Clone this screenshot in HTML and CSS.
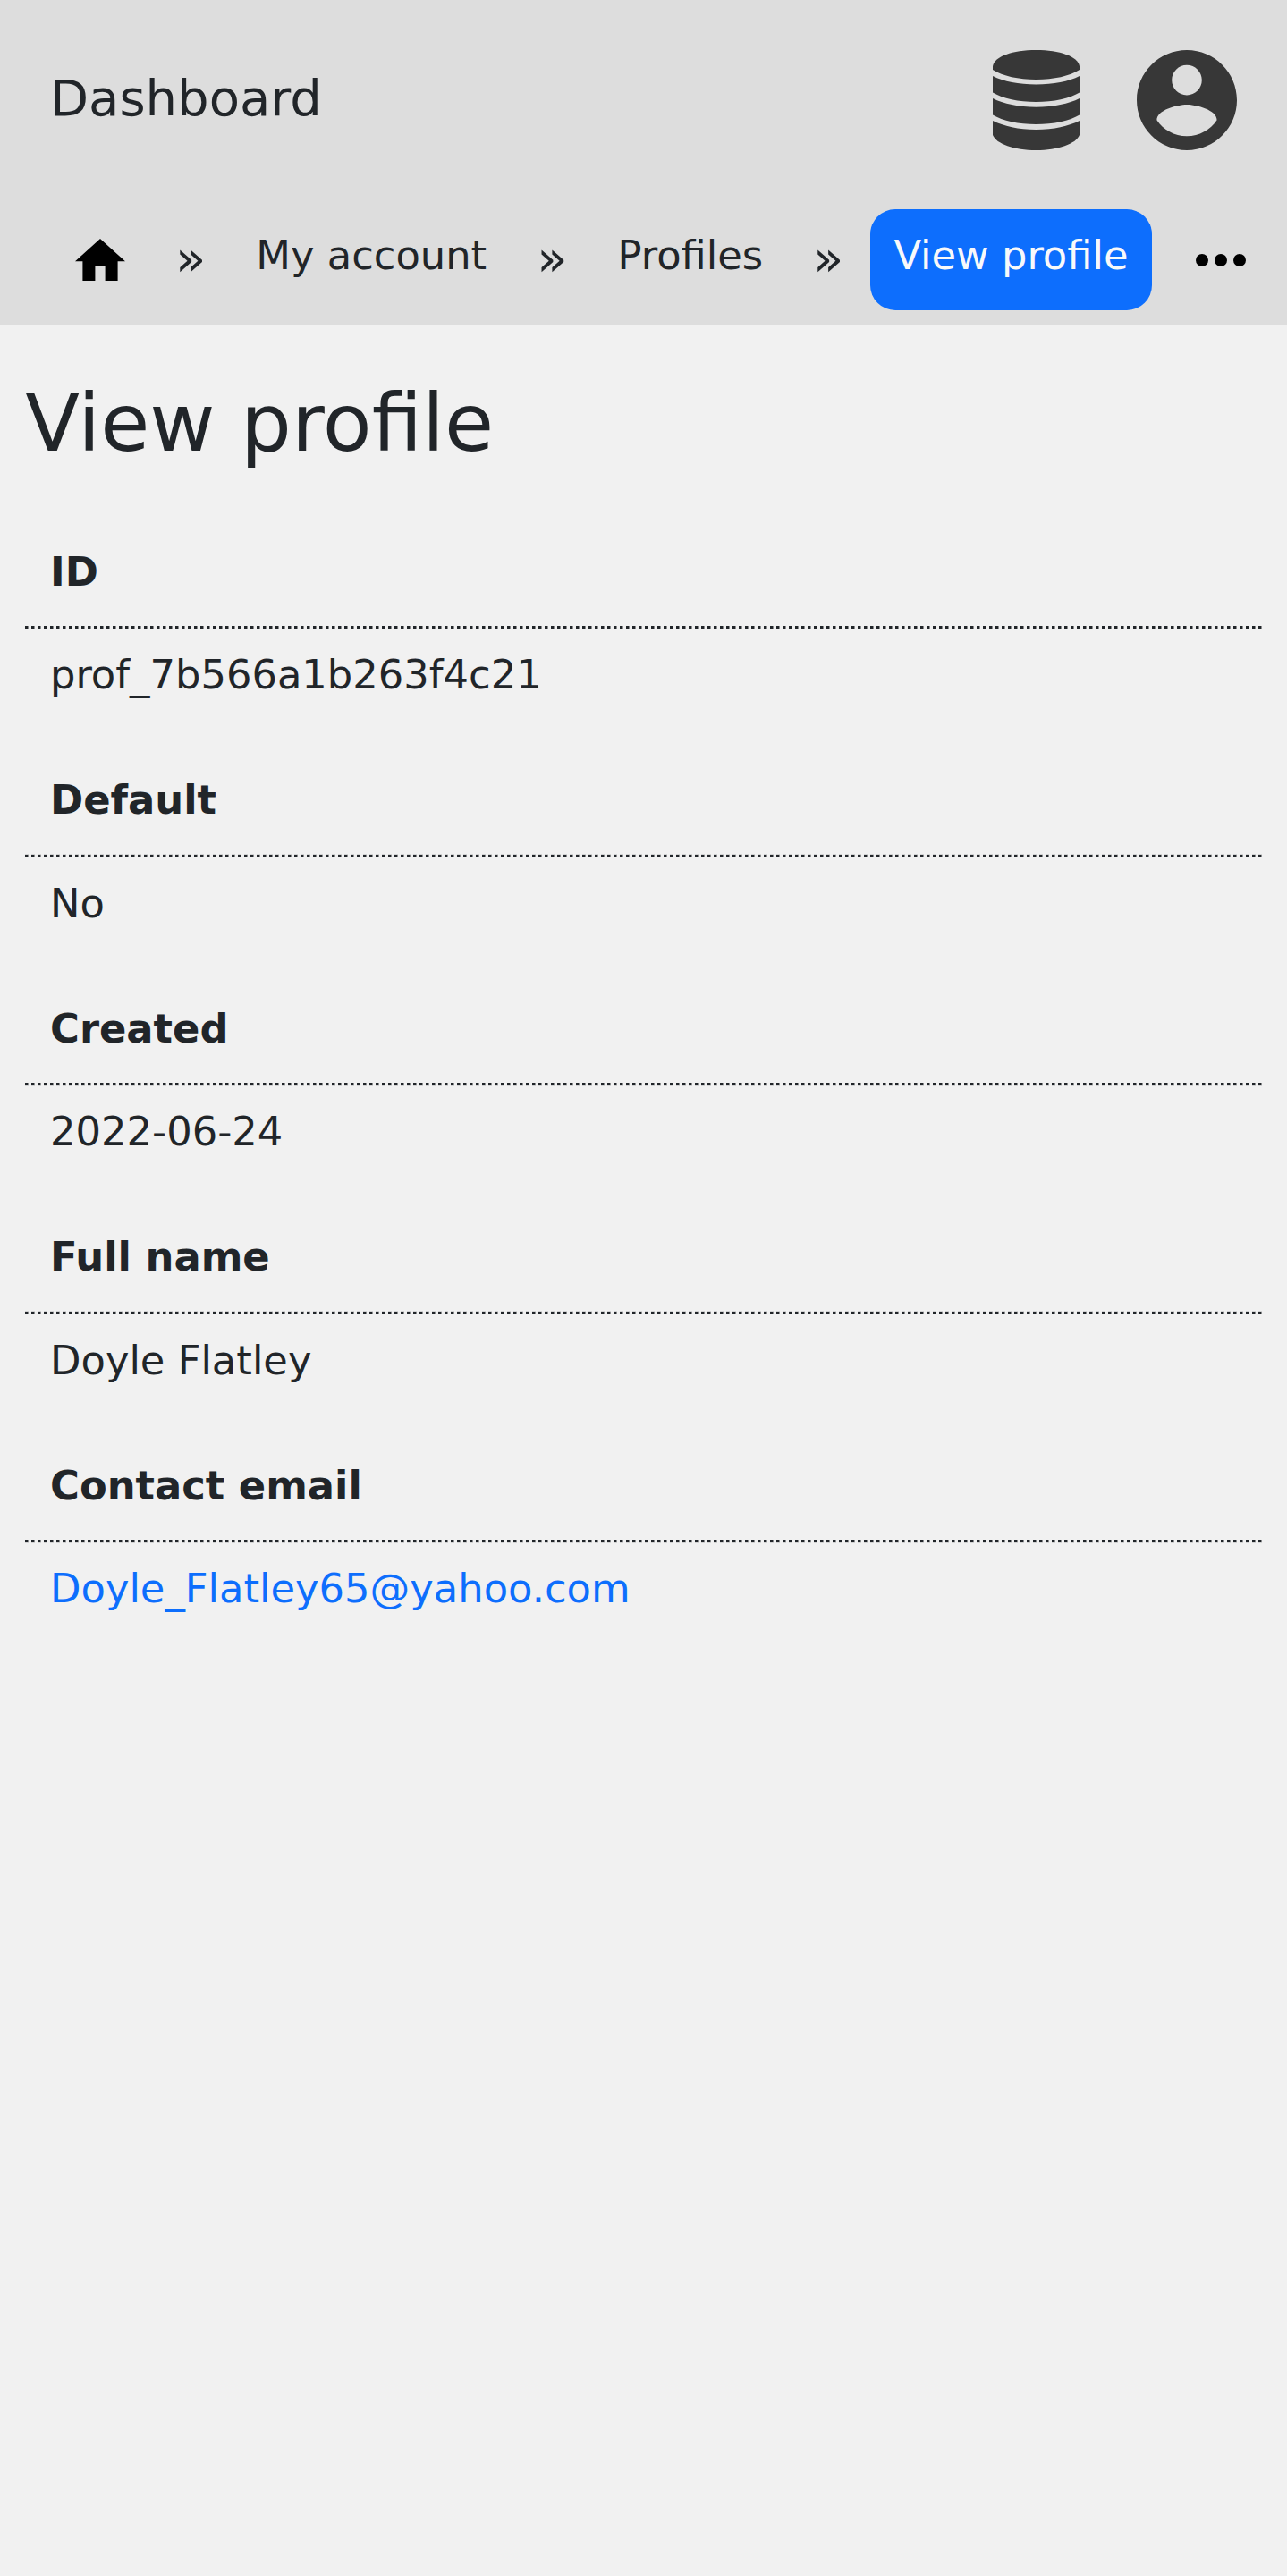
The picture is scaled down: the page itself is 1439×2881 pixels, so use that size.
FILE: index.html
```html
<!DOCTYPE html>
<html lang="en">
<head>
<meta charset="utf-8">
<title>View profile</title>
<link rel="stylesheet" href="styles.css">
</head>
<body>
<header class="header">
  <div class="topbar">
    <a class="brand">Dashboard</a>
    <svg class="icon-db" viewBox="0 0 97 112" aria-label="Database">
      <path d="M0 18C2 7 22 0 48.500 0S95 7 97 18v4C86 29 68 33 48.500 33S11 29 0 22z"/>
      <path d="M0 29C12 35 29 38.500 48.500 38.500S85 35 97 29V47.500C86 54 68 58 48.500 58S11 54 0 47.500z"/>
      <path d="M0 54C12 60 29 63.700 48.500 63.700S85 60 97 54V72.500C86 79 68 83 48.500 83S11 79 0 72.500z"/>
      <path d="M0 79C12 85 29 89 48.500 89S85 85 97 79V95C93 105 73 112 48.500 112S4 105 0 95z"/>
    </svg>
    <svg class="icon-user" viewBox="2 2 20 20" aria-label="Account">
      <path d="M12 2C6.480 2 2 6.480 2 12s4.480 10 10 10 10-4.480 10-10S17.520 2 12 2zm0 3c1.660 0 3 1.340 3 3s-1.340 3-3 3-3-1.340-3-3 1.340-3 3-3zm0 14.200c-2.500 0-4.710-1.280-6-3.220.030-1.990 4-3.080 6-3.080 1.990 0 5.970 1.090 6 3.080-1.290 1.940-3.500 3.220-6 3.220z"/>
    </svg>
  </div>
  <nav class="crumbs">
    <svg class="icon-home" viewBox="2 3 20 17" aria-label="Home"><path d="M10 20v-6h4v6h5v-8h3L12 3 2 12h3v8z"/></svg>
    <span class="sep">»</span>
    <a class="crumb">My account</a>
    <span class="sep">»</span>
    <a class="crumb">Profiles</a>
    <span class="sep">»</span>
    <a class="crumb active">View profile</a>
    <svg class="icon-more" viewBox="0 0 56 14" aria-label="More"><circle cx="7" cy="7" r="7"/><circle cx="28" cy="7" r="7"/><circle cx="49" cy="7" r="7"/></svg>
  </nav>
</header>
<main class="content">
  <h1 class="title">View profile</h1>
  <dl class="fields">
    <div class="field"><dt>ID</dt><dd>prof_7b566a1b263f4c21</dd></div>
    <div class="field"><dt>Default</dt><dd>No</dd></div>
    <div class="field"><dt>Created</dt><dd>2022-06-24</dd></div>
    <div class="field"><dt>Full name</dt><dd>Doyle Flatley</dd></div>
    <div class="field"><dt>Contact email</dt><dd><a class="link">Doyle_Flatley65@yahoo.com</a></dd></div>
  </dl>
</main>
</body>
</html>
```
FILE: styles.css
```css
* { box-sizing: border-box; }
body {
  margin: 0;
  min-height: 2881px;
  background: #f1f1f1;
  color: #212529;
  font-family: "DejaVu Sans", sans-serif;
  font-size: 44.8px;
  line-height: 67px;
}
svg { display: block; flex: none; }
.header { height: 364px; background: #ddd; }
.topbar {
  display: flex;
  align-items: center;
  height: 224px;
  padding: 0 56px;
}
.brand { flex: 1; font-size: 56px; line-height: 84px; margin-top: -4px; }
.icon-db { width: 97px; height: 112px; margin-right: 64px; fill: #373737; }
.icon-user { width: 112px; height: 112px; fill: #373737; }
.crumbs {
  display: flex;
  align-items: flex-start;
  height: 140px;
  padding: 10px 46px 0 84px;
  white-space: nowrap;
}
.icon-home { width: 56px; height: 47.6px; margin-top: 32.5px; }
.sep { width: 34.3px; margin: 12.5px 0 0 56px; font-size: 56px; line-height: 84px; }
.crumb {
  height: 113px;
  margin-left: 28px;
  padding: 18px 28px 0;
}
.crumb + .sep { margin-left: 28px; }
.crumb.active {
  margin-left: 29.5px;
  padding: 18px 26.5px 0;
  border-radius: 28px;
  background: #0d6efd;
  color: #f8f9fa;
}
.icon-more { width: 56px; height: 14px; margin: 49.5px 0 0 auto; }
.content { padding: 55px 28px 0; }
.title { margin: 0; font-size: 89.6px; line-height: 108px; font-weight: 400; }
.fields { margin: 79px 0 0; }
.field:nth-child(odd) { height: 255px; }
.field:nth-child(even) { height: 256px; }
dt { height: 98px; padding: 0 28px; font-weight: 700; }
/* square 3.5px dots: a solid 3px band with a faint 1px edge */
dt {
  --dots: repeating-linear-gradient(90deg, #212529 0 3px, rgba(33, 37, 41, .5) 3px 4px, transparent 4px 7px);
  --edge: repeating-linear-gradient(90deg, rgba(33, 37, 41, .15) 0 4px, transparent 4px 7px);
  background: var(--dots) 0 94px / 100% 3px no-repeat, var(--edge) 0 97px / 100% 1px no-repeat;
}
.field:nth-child(even) dt {
  background-position: 0 95px, 0 94px;
}
dd { margin: 0; padding: 17px 28px 0; }
.field:nth-child(even) dd { padding-top: 18px; }
.link { color: #0d6efd; }
```
